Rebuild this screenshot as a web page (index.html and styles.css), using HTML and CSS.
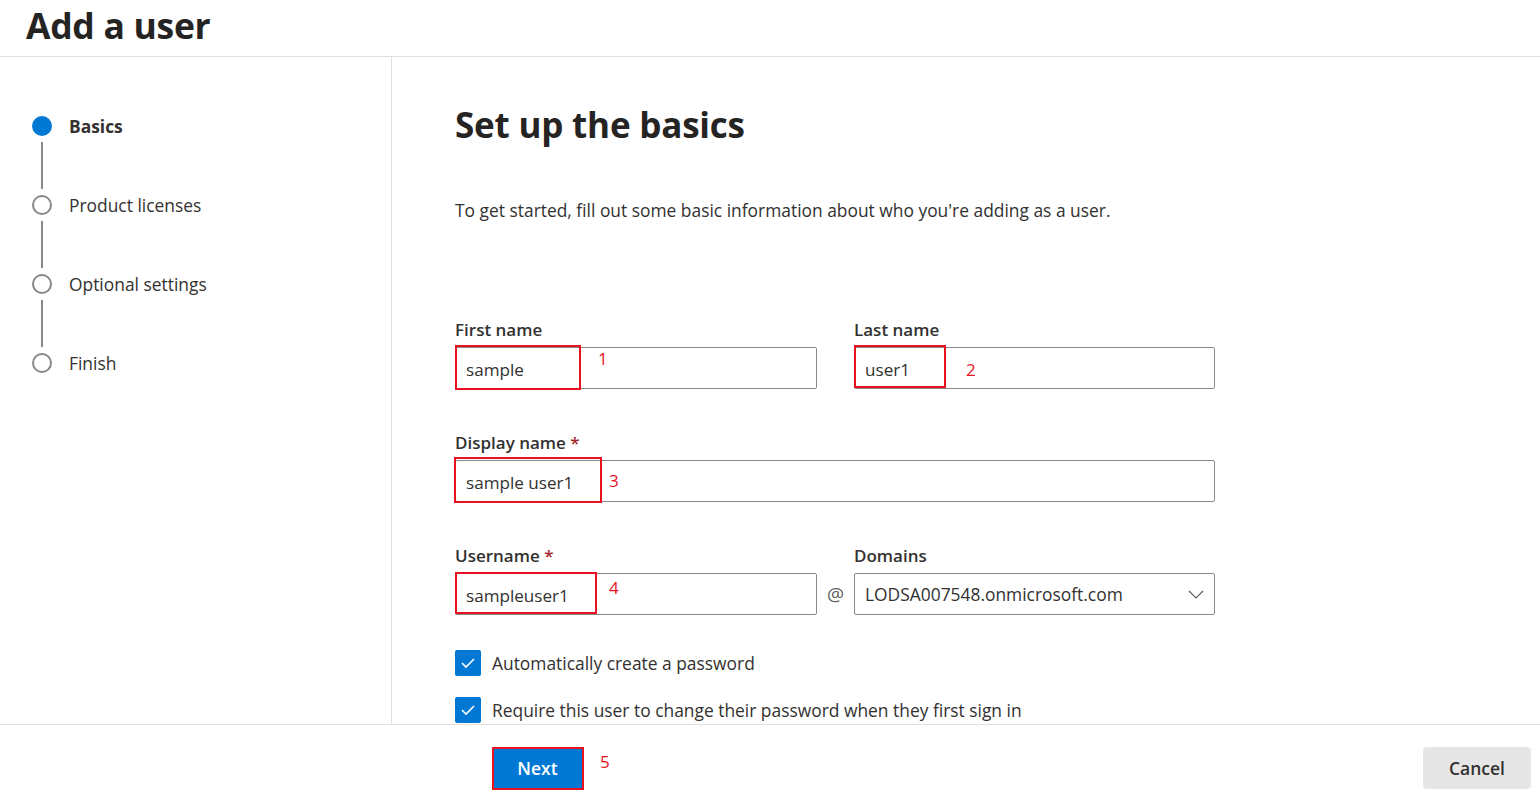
FILE: index.html
```html
<!DOCTYPE html>
<html lang="en">
<head>
<meta charset="utf-8">
<title>Add a user</title>
<link rel="stylesheet" href="styles.css">
</head>
<body>
<header class="page-header">
  <h1 class="page-title">Add a user</h1>
</header>
<div class="page-body">
  <nav class="steps">
    <div class="step step-active">
      <span class="step-dot"></span><span class="step-label">Basics</span>
    </div>
    <div class="step-line"></div>
    <div class="step">
      <span class="step-dot"></span><span class="step-label">Product licenses</span>
    </div>
    <div class="step-line"></div>
    <div class="step">
      <span class="step-dot"></span><span class="step-label">Optional settings</span>
    </div>
    <div class="step-line"></div>
    <div class="step">
      <span class="step-dot"></span><span class="step-label">Finish</span>
    </div>
  </nav>
  <main class="content">
    <h2 class="content-title">Set up the basics</h2>
    <p class="content-desc">To get started, fill out some basic information about who you're adding as a user.</p>
    <div class="form-grid">
      <div class="field f-first">
        <label class="field-label">First name</label>
        <div class="input"><span class="input-text">sample</span>
          <span class="mark mark-1"></span><span class="mark-num num-1">1</span></div>
      </div>
      <div class="field f-last">
        <label class="field-label">Last name</label>
        <div class="input"><span class="input-text">user1</span>
          <span class="mark mark-2"></span><span class="mark-num num-2">2</span></div>
      </div>
      <div class="field f-display">
        <label class="field-label">Display name <span class="req">*</span></label>
        <div class="input"><span class="input-text">sample user1</span>
          <span class="mark mark-3"></span><span class="mark-num num-3">3</span></div>
      </div>
      <div class="field f-user">
        <label class="field-label">Username <span class="req">*</span></label>
        <div class="input"><span class="input-text">sampleuser1</span>
          <span class="mark mark-4"></span><span class="mark-num num-4">4</span></div>
      </div>
      <div class="at-sign">@</div>
      <div class="field f-domain">
        <label class="field-label">Domains</label>
        <div class="input select"><span class="input-text">LODSA007548.onmicrosoft.com</span>
          <svg class="chevron" width="16" height="9" viewBox="0 0 16 9"><polyline points="1,1 8,8 15,1" fill="none" stroke="#605e5c" stroke-width="1.2"/></svg>
        </div>
      </div>
    </div>
    <div class="checks">
      <div class="check-row">
        <span class="checkbox"><svg width="16" height="12" viewBox="0 0 16 12"><polyline points="2,6 6,10 14,2" fill="none" stroke="#fff" stroke-width="1.6"/></svg></span>
        <span class="check-label">Automatically create a password</span>
      </div>
      <div class="check-row">
        <span class="checkbox"><svg width="16" height="12" viewBox="0 0 16 12"><polyline points="2,6 6,10 14,2" fill="none" stroke="#fff" stroke-width="1.6"/></svg></span>
        <span class="check-label">Require this user to change their password when they first sign in</span>
      </div>
    </div>
  </main>
</div>
<footer class="footer">
  <div class="next-wrap">
    <button class="btn btn-primary">Next</button>
    <span class="mark mark-5"></span><span class="mark-num num-5">5</span>
  </div>
  <button class="btn btn-cancel">Cancel</button>
</footer>
</body>
</html>
```

FILE: styles.css
```css
* { box-sizing: border-box; }
html, body {
  margin: 0;
  padding: 0;
  width: 1540px;
  height: 798px;
  overflow: hidden;
  background: #fff;
  font-family: "Open Sans", "Noto Sans", "Liberation Sans", sans-serif;
  color: #323130;
}
.page-header {
  height: 57px;
  border-bottom: 1px solid #e1dfdd;
  padding-left: 26px;
}
.page-title {
  margin: 0;
  font-size: 35.5px;
  line-height: 50px;
  font-weight: 700;
  color: #252423;
  letter-spacing: -0.3px;
}
.page-body {
  display: flex;
  height: 667px;
  overflow: hidden;
}
.steps {
  width: 392px;
  flex: none;
  border-right: 1px solid #e1dfdd;
  padding: 59px 0 0 32px;
  display: flex;
  flex-direction: column;
}
.step {
  display: flex;
  align-items: center;
  height: 20px;
}
.step-dot {
  width: 20px;
  height: 20px;
  border-radius: 50%;
  border: 2px solid #8a8886;
  flex: none;
}
.step-active .step-dot {
  background: #0078d4;
  border-color: #0078d4;
}
.step-label {
  margin-left: 17px;
  font-size: 17.4px;
  color: #323130;
}
.step-active .step-label { font-weight: 700; }
.step-line {
  width: 2px;
  height: 47px;
  margin: 6px 0 6px 9px;
  background: #8a8886;
}
.content {
  flex: 1;
  padding: 46px 0 0 63px;
}
.content-title {
  margin: 0;
  font-size: 35px;
  line-height: 44px;
  font-weight: 700;
  color: #252423;
  letter-spacing: -0.2px;
}
.content-desc {
  margin: 51px 0 0;
  font-size: 17.4px;
  line-height: 24px;
}
.form-grid {
  margin-top: 96px;
  display: grid;
  grid-template-columns: 362px 37px 361px;
  row-gap: 42px;
  width: 760px;
}
.f-first { grid-column: 1; grid-row: 1; }
.f-last { grid-column: 3; grid-row: 1; }
.f-display { grid-column: 1 / 4; grid-row: 2; }
.f-user { grid-column: 1; grid-row: 3; }
.at-sign {
  grid-column: 2; grid-row: 3;
  align-self: end;
  height: 42px;
  line-height: 42px;
  text-align: center;
  font-size: 19px;
  color: #605e5c;
}
.f-domain { grid-column: 3; grid-row: 3; }
.field-label {
  display: block;
  font-size: 17px;
  line-height: 24px;
  font-weight: 600;
  margin-bottom: 5px;
}
.req { color: #a4262c; }
.input {
  position: relative;
  height: 42px;
  border: 1px solid #8a8886;
  border-radius: 2px;
  padding-left: 10px;
  display: flex;
  align-items: center;
}
.input-text {
  font-size: 17.1px;
  color: #323130;
  padding-top: 2px;
}
.select { justify-content: space-between; padding-right: 10px; }
.select .input-text { font-size: 17.4px; padding-top: 0; }
.chevron { flex: none; }
.mark {
  position: absolute;
  border: 2px solid #e8121f;
  pointer-events: none;
}
.mark-num {
  position: absolute;
  color: #e8121f;
  font-size: 17px;
  line-height: 20px;
}
.mark-1 { left: -1px; top: -3px; width: 126px; height: 45px; }
.num-1 { left: 142px; top: 1px; }
.mark-2 { left: -1px; top: -3px; width: 92px; height: 43px; }
.num-2 { left: 111px; top: 12px; }
.mark-3 { left: -2px; top: -4px; width: 148px; height: 46px; }
.num-3 { left: 153px; top: 10px; }
.mark-4 { left: -1px; top: -2px; width: 142px; height: 42px; }
.num-4 { left: 153px; top: 4px; }
.checks {
  margin-top: 35px;
  display: flex;
  flex-direction: column;
  gap: 21px;
}
.check-row {
  display: flex;
  align-items: center;
  height: 26px;
}
.checkbox {
  width: 26px;
  height: 26px;
  border-radius: 2px;
  background: #0078d4;
  display: flex;
  align-items: center;
  justify-content: center;
  flex: none;
}
.check-label {
  margin-left: 11px;
  font-size: 17.4px;
}
.footer {
  height: 74px;
  border-top: 1px solid #e1dfdd;
  display: flex;
  align-items: flex-start;
  justify-content: space-between;
  padding: 22px 9px 0 492px;
}
.next-wrap { position: relative; }
.btn {
  font-family: inherit;
  font-size: 17.5px;
  font-weight: 600;
  height: 42px;
  border: none;
  border-radius: 2px;
  cursor: pointer;
}
.btn-primary {
  background: #0078d4;
  color: #fff;
  width: 91px;
}
.mark-5 { left: 0; top: 0; width: 92px; height: 43px; }
.num-5 { left: 108px; top: 5px; }
.btn-cancel {
  background: #e6e6e6;
  color: #323130;
  width: 108px;
  border-radius: 4px;
}
```
